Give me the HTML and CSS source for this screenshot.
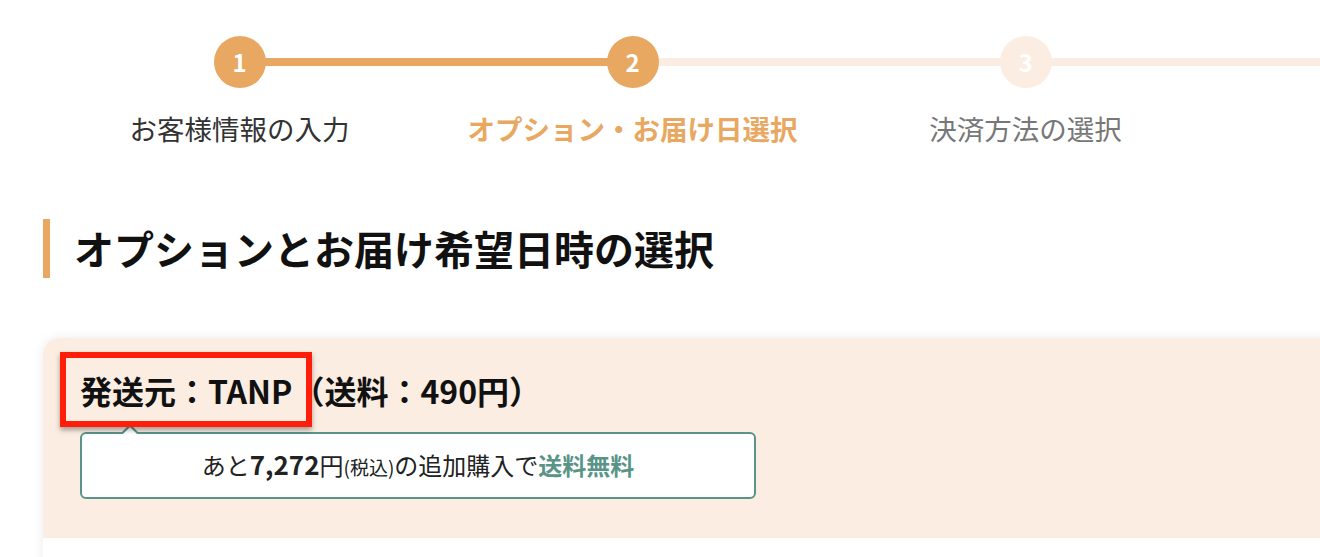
FILE: index.html
```html
<!DOCTYPE html>
<html lang="ja">
<head>
    <meta charset="utf-8">
    <title>オプションとお届け希望日時の選択</title>
    <link rel="stylesheet" href="styles.css">
</head>
<body>
    <div class="page">
        <ol class="stepper">
            <li class="step done">
                <span class="step-num">1</span>
                <span class="step-label">お客様情報の入力</span>
            </li>
            <li class="step current">
                <span class="step-num">2</span>
                <span class="step-label">オプション・お届け日選択</span>
            </li>
            <li class="step">
                <span class="step-num">3</span>
                <span class="step-label">決済方法の選択</span>
            </li>
        </ol>

        <h1 class="section-title">オプションとお届け希望日時の選択</h1>

        <div class="card">
            <div class="card-head">
                <h2 class="shipper">発送元：TANP（送料：490円）</h2>
                <div class="free-ship">
                    あと<b>7,272</b>円<small>(税込)</small>の追加購入で<strong>送料無料</strong>
                </div>
                <div class="mark"></div>
            </div>
            <div class="card-body"></div>
        </div>
    </div>
</body>
</html>
```

FILE: styles.css
```css
html {
    overflow: hidden;
}
body {
    margin: 0;
    font-family: "Noto Sans CJK JP", "Noto Sans", sans-serif;
    color: #222;
    background: #fff;
}
.page {
    width: 1320px;
    padding-left: 43px;
}

/* stepper */
.stepper {
    display: flex;
    list-style: none;
    margin: 0;
    padding: 36px 0 0;
}
.step {
    flex: none;
    width: 393px;
    display: flex;
    flex-direction: column;
    align-items: center;
    position: relative;
}
.step::before {
    content: "";
    position: absolute;
    top: 22px;
    left: 50%;
    width: 100%;
    height: 8px;
    background: #fbede1;
}
.step.done::before {
    background: #e8a862;
}
.step-num {
    position: relative;
    z-index: 1;
    width: 52px;
    height: 52px;
    border-radius: 50%;
    background: #fbede1;
    color: #fff;
    font-size: 24px;
    font-weight: bold;
    line-height: 52px;
    text-align: center;
}
.step.done .step-num,
.step.current .step-num {
    background: #e8a862;
}
.step-label {
    margin-top: 19px;
    font-size: 27.5px;
    line-height: 42px;
    color: #777;
    white-space: nowrap;
}
.step.done .step-label {
    color: #333;
}
.step.current .step-label {
    color: #e8a862;
    font-weight: bold;
}

/* heading */
.section-title {
    margin: 70px 0 0;
    border-left: 7px solid #e8a862;
    padding-left: 24px;
    font-size: 40px;
    line-height: 59px;
    font-weight: bold;
    color: #111;
}

/* card */
.card {
    margin-top: 60px;
    border-top-left-radius: 16px;
    box-shadow: 0 0 12px rgba(0, 0, 0, 0.08);
    overflow: hidden;
}
.card-head {
    position: relative;
    background: #fbede1;
    padding: 30px 37px 39px;
}
.shipper {
    margin: 0;
    font-size: 32px;
    line-height: 44px;
    font-weight: bold;
    color: #111;
}
.free-ship {
    position: relative;
    width: 672px;
    margin-top: 20px;
    border: 2px solid #5a9488;
    border-radius: 6px;
    background: #fff;
    font-size: 24px;
    line-height: 60px;
    text-align: center;
    color: #222;
}
.free-ship::before,
.free-ship::after {
    content: "";
    position: absolute;
    left: 38px;
    border-style: solid;
    border-color: transparent;
}
.free-ship::before {
    top: -10px;
    border-width: 0 10px 10px;
    border-bottom-color: #5a9488;
}
.free-ship::after {
    top: -7px;
    left: 40px;
    border-width: 0 8px 8px;
    border-bottom-color: #fff;
}
.free-ship b {
    font-size: 26px;
}
.free-ship small {
    font-size: 19px;
}
.free-ship strong {
    color: #5a9488;
}
.mark {
    position: absolute;
    left: 17px;
    top: 14px;
    width: 240px;
    height: 63px;
    border: 6px solid #ff1e0a;
    box-shadow: 0 3px 5px rgba(0, 0, 0, 0.35);
}
.card-body {
    height: 120px;
    background: #fff;
}
```
